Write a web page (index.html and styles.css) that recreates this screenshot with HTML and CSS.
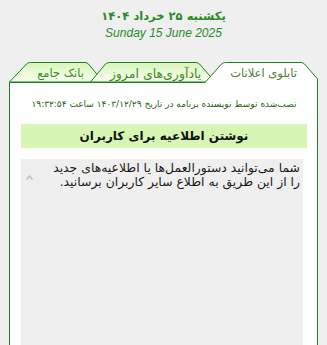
FILE: index.html
```
<!DOCTYPE html>
<html lang="fa" dir="rtl">
<head>
<meta charset="utf-8">
<title>تابلوی اعلانات</title>
<link rel="stylesheet" href="styles.css">
</head>
<body>
<header class="date">
  <div class="date-fa">یکشنبه ۲۵ خرداد ۱۴۰۴</div>
  <div class="date-en" dir="ltr">Sunday 15 June 2025</div>
</header>
<main class="board">
  <nav class="tabs">
    <div class="tab tab-active">
      <svg class="tab-bg" viewBox="0 0 113 21" preserveAspectRatio="none" aria-hidden="true">
        <path d="M0.5,21 L0.5,19.5 L16.5,2 Q18,0.5 20.5,0.5 L96,0.5 Q98,0.5 99.5,2 L112.5,17 L112.5,21 Z" fill="#ffffff" stroke="none"/>
        <path d="M0.5,20 L16.5,2 Q18,0.5 20.5,0.5 L96,0.5 Q98,0.5 99.5,2 L112.5,17 L112.5,21" fill="none" stroke="#1f7f1f" stroke-width="1"/>
      </svg>
      <span class="tab-label">تابلوی اعلانات</span>
    </div>
    <div class="tab tab-2">
      <svg class="tab-bg" viewBox="0 0 123 20" preserveAspectRatio="none" aria-hidden="true">
        <defs>
          <linearGradient id="g2" x1="0" y1="0" x2="0" y2="1">
            <stop offset="0" stop-color="#d9f6b9"/>
            <stop offset="1" stop-color="#f9fff2"/>
          </linearGradient>
        </defs>
        <path d="M0.5,20 L15.5,2 Q17,0.5 19.5,0.5 L106,0.5 Q108,0.5 109.5,2 L122.5,17 L122.5,20 Z" fill="url(#g2)" stroke="#1f7f1f" stroke-width="1"/>
      </svg>
      <span class="tab-label">یادآوری‌های امروز</span>
    </div>
    <div class="tab tab-1">
      <svg class="tab-bg" viewBox="0 0 89 20" preserveAspectRatio="none" aria-hidden="true">
        <defs>
          <linearGradient id="g1" x1="0" y1="0" x2="0" y2="1">
            <stop offset="0" stop-color="#d9f6b9"/>
            <stop offset="1" stop-color="#f9fff2"/>
          </linearGradient>
        </defs>
        <path d="M0.5,20 L17.5,2 Q19,0.5 21.5,0.5 L76,0.5 Q78,0.5 79.5,2 L88.5,13 L88.5,20 Z" fill="url(#g1)" stroke="#1f7f1f" stroke-width="1"/>
      </svg>
      <span class="tab-label">بانک جامع</span>
    </div>
  </nav>
  <section class="panel">
    <p class="installed">نصب‌شده توسط نویسنده برنامه در تاریخ ۱۴۰۳/۱۲/۲۹ ساعت ۱۹:۳۲:۵۴</p>
    <h2 class="compose-title">نوشتن اطلاعیه برای کاربران</h2>
    <div class="editor">
      <span class="scroll-arrow" aria-hidden="true">
        <svg width="7" height="5" viewBox="0 0 7 5"><path d="M0.5,4.5 L3.5,1 L6.5,4.5" fill="none" stroke="#b9b9b9" stroke-width="1.2"/></svg>
      </span>
      <div class="editor-text">شما می‌توانید دستورالعمل‌ها یا اطلاعیه‌های جدید را از این طریق به اطلاع سایر کاربران برسانید.</div>
    </div>
  </section>
</main>
</body>
</html>
```
FILE: styles.css
```
html, body {
  margin: 0;
  padding: 0;
  height: 345px;
  overflow: hidden;
}

body {
  background: #efefef;
  font-family: "DejaVu Sans", "Noto Sans", sans-serif;
  direction: rtl;
  display: flex;
  flex-direction: column;
}

.date {
  text-align: center;
  padding-top: 8px;
  color: #2a8a2a;
  flex: none;
}

.date-fa {
  font-weight: bold;
  font-size: 11.5px;
  line-height: 16px;
}

.date-en {
  font-family: "Liberation Sans", Arial, sans-serif;
  font-style: italic;
  font-size: 12px;
  line-height: 16px;
  margin-top: 1px;
}

.board {
  margin: 21px 9px 0 9px;
  flex: 1;
  display: flex;
  flex-direction: column;
  min-height: 0;
}

.tabs {
  display: flex;
  height: 20px;
  align-items: flex-end;
  position: relative;
  z-index: 2;
  flex: none;
}

.tab {
  position: relative;
  height: 20px;
  display: flex;
  align-items: center;
  justify-content: center;
  flex: none;
}

.tab-bg {
  position: absolute;
  inset: 0;
  width: 100%;
  height: 100%;
}

.tab-label {
  position: relative;
  font-size: 11px;
  color: #3e8c1c;
  padding-top: 2px;
  white-space: nowrap;
}

.tab-active {
  width: 113px;
  height: 21px;
  margin-bottom: -1px;
  z-index: 3;
}

.tab-active .tab-label {
  color: #4f7d30;
  font-size: 11.5px;
  padding-top: 1px;
  padding-left: 4px;
}

.tab-2 {
  width: 123px;
  margin-right: -8px;
  z-index: 2;
}

.tab-2 .tab-label {
  font-size: 12.5px;
  padding-left: 8px;
}

.tab-1 {
  width: 89px;
  margin-right: -8px;
  z-index: 1;
}

.tab-1 .tab-label {
  font-size: 11.5px;
  padding-left: 14px;
}

.panel {
  background: #ffffff;
  border: 1px solid #1f7f1f;
  border-bottom: none;
  flex: 1;
  padding: 14px 10px 0 11px;
  position: relative;
  z-index: 1;
  display: flex;
  flex-direction: column;
  min-height: 0;
}

.installed {
  margin: 0;
  text-align: center;
  font-size: 9px;
  line-height: 14px;
  color: #2e5e1a;
  white-space: nowrap;
}

.compose-title {
  margin: 13px 0 0 0;
  height: 24px;
  line-height: 24px;
  background: #d7f6b6;
  text-align: center;
  font-size: 12px;
  font-weight: bold;
  color: #111111;
}

.editor {
  margin: 11px 4px 0 0;
  background: #efefef;
  flex: 1;
  display: flex;
  align-items: flex-start;
  padding: 2px 3px 0 4px;
}

.editor-text {
  flex: 1;
  font-size: 12.4px;
  line-height: 14px;
  color: #1a1a1a;
  text-align: right;
}

.scroll-arrow {
  order: 2;
  flex: none;
  width: 22px;
  padding-top: 4px;
  text-align: left;
  direction: ltr;
}

.scroll-arrow svg {
  margin-left: 1px;
}
```
